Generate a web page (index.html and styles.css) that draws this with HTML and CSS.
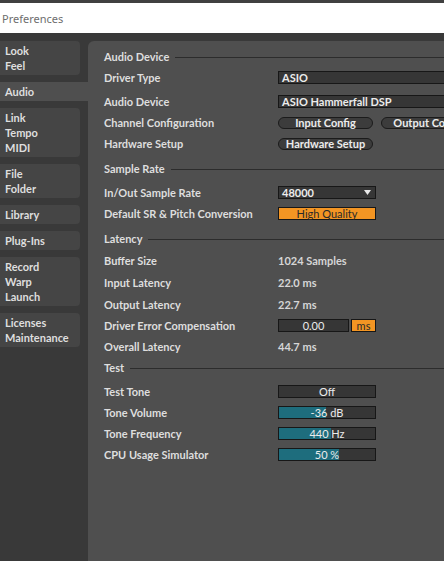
FILE: index.html
```html
<!DOCTYPE html>
<html lang="en">
<head>
    <meta charset="UTF-8">
    <title>Preferences</title>
    <link rel="stylesheet" href="styles.css">
</head>
<body>

<div class="titlebar">Preferences</div>

<div class="window">
    <ul class="sidebar">
        <li class="tab">Look<br>Feel</li>
        <li class="tab active">Audio</li>
        <li class="tab">Link<br>Tempo<br>MIDI</li>
        <li class="tab">File<br>Folder</li>
        <li class="tab">Library</li>
        <li class="tab">Plug-Ins</li>
        <li class="tab">Record<br>Warp<br>Launch</li>
        <li class="tab">Licenses<br>Maintenance</li>
    </ul>

    <div class="panel">
        <div class="heading">Audio Device</div>
        <div class="row">
            <span class="label">Driver Type</span>
            <span class="field wide">ASIO</span>
        </div>
        <div class="row gap">
            <span class="label">Audio Device</span>
            <span class="field wide">ASIO Hammerfall DSP</span>
        </div>
        <div class="row">
            <span class="label">Channel Configuration</span>
            <span class="pill">Input Config</span>
            <span class="pill">Output Config</span>
        </div>
        <div class="row">
            <span class="label">Hardware Setup</span>
            <span class="pill">Hardware Setup</span>
        </div>

        <div class="heading spaced">Sample Rate</div>
        <div class="row gap">
            <span class="label">In/Out Sample Rate</span>
            <span class="field select">48000
                <svg class="arrow" width="7" height="5" viewBox="0 0 7 5"><polygon points="0,0 7,0 3.5,5" fill="#e8e8e8"/></svg>
            </span>
        </div>
        <div class="row">
            <span class="label">Default SR &amp; Pitch Conversion</span>
            <span class="toggle on">High Quality</span>
        </div>

        <div class="heading spaced">Latency</div>
        <div class="row text">
            <span class="label">Buffer Size</span>
            <span class="value">1024 Samples</span>
        </div>
        <div class="row text">
            <span class="label">Input Latency</span>
            <span class="value">22.0 ms</span>
        </div>
        <div class="row text">
            <span class="label">Output Latency</span>
            <span class="value">22.7 ms</span>
        </div>
        <div class="row">
            <span class="label">Driver Error Compensation</span>
            <span class="number">0.00</span>
            <span class="unit">ms</span>
        </div>
        <div class="row">
            <span class="label">Overall Latency</span>
            <span class="value">44.7 ms</span>
        </div>

        <div class="heading">Test</div>
        <div class="row gap">
            <span class="label">Test Tone</span>
            <span class="toggle">Off</span>
        </div>
        <div class="row">
            <span class="label">Tone Volume</span>
            <span class="slider"><span class="fill" style="width: 49%"></span><span class="slider-text">-36 dB</span></span>
        </div>
        <div class="row">
            <span class="label">Tone Frequency</span>
            <span class="slider"><span class="fill" style="width: 54%"></span><span class="slider-text">440 Hz</span></span>
        </div>
        <div class="row">
            <span class="label">CPU Usage Simulator</span>
            <span class="slider"><span class="fill" style="width: 62%"></span><span class="slider-text">50 %</span></span>
        </div>
    </div>
</div>

</body>
</html>
```

FILE: styles.css
```css
html, body {
    margin: 0;
    padding: 0;
    height: 100%;
    overflow: hidden;
}

body {
    background: #393939;
    font-family: Lato, "Liberation Sans", sans-serif;
    font-size: 11px;
    font-weight: bold;
    color: #dedede;
}

ul {
    margin: 0;
    padding: 0;
    list-style: none;
}

.titlebar {
    height: 30px;
    line-height: 31px;
    border-top: 3px solid #404040;
    background: #fff;
    padding-left: 2px;
    font-family: "Noto Sans", sans-serif;
    font-size: 11px;
    font-weight: normal;
    color: #6e6e6e;
}

.window {
    display: flex;
    padding-top: 8px;
    height: 520px;
}

.sidebar {
    display: flex;
    flex-direction: column;
    gap: 7px;
    width: 88px;
    flex-shrink: 0;
}

.sidebar > .tab {
    width: 75px;
    padding: 2px 0 2px 5px;
    line-height: 15px;
    background: #454545;
    border-radius: 0 4px 4px 0;
}

.sidebar > .tab.active {
    width: 83px;
    background: #4f4f4f;
    border-radius: 0;
}

.panel {
    flex: 1;
    min-width: 0;
    overflow: hidden;
    background: #4f4f4f;
    border-top-left-radius: 6px;
    padding: 5px 0 0 16px;
}

.heading {
    display: flex;
    align-items: center;
    height: 21px;
    white-space: nowrap;
}

.heading::after {
    content: '';
    flex: 1;
    height: 1px;
    margin: 1px 0 0 6px;
    background: #2c2c2c;
}

.heading.spaced {
    margin-top: 4px;
}

.row {
    display: flex;
    align-items: center;
    height: 21px;
    white-space: nowrap;
}

.row.gap {
    margin-top: 3px;
}

.row.text {
    height: 22px;
}

.row > .label {
    width: 174px;
    flex-shrink: 0;
}

.field,
.toggle,
.number,
.unit,
.slider {
    box-sizing: border-box;
    height: 13px;
    line-height: 11px;
    border: 1px solid #171717;
    background: #363636;
    flex-shrink: 0;
}

.field {
    padding-left: 3px;
    color: #ececec;
}

.field.wide {
    width: 260px;
}

.field.select {
    position: relative;
    width: 98px;
}

.field.select > .arrow {
    position: absolute;
    right: 4px;
    top: 3px;
}

.pill {
    box-sizing: border-box;
    width: 95px;
    height: 12px;
    line-height: 10px;
    margin-right: 8px;
    border: 1px solid #1b1b1b;
    border-radius: 6px;
    background: #3c3c3c;
    text-align: center;
    color: #ececec;
    flex-shrink: 0;
}

.toggle {
    width: 98px;
    text-align: center;
    font-weight: normal;
    color: #ececec;
}

.toggle.on,
.unit {
    background: #f39523;
    color: #2a2a2a;
}

.number {
    width: 71px;
    margin-right: 2px;
    text-align: center;
    font-weight: normal;
    color: #ececec;
}

.unit {
    width: 25px;
    text-align: center;
    font-weight: normal;
}

.value {
    color: #d6d6d6;
}

.slider {
    position: relative;
    width: 98px;
}

.slider > .fill {
    position: absolute;
    left: 0;
    top: 0;
    bottom: 0;
    background: #1e6d7d;
}

.slider > .slider-text {
    position: relative;
    display: block;
    text-align: center;
    font-weight: normal;
    color: #ececec;
}
```
